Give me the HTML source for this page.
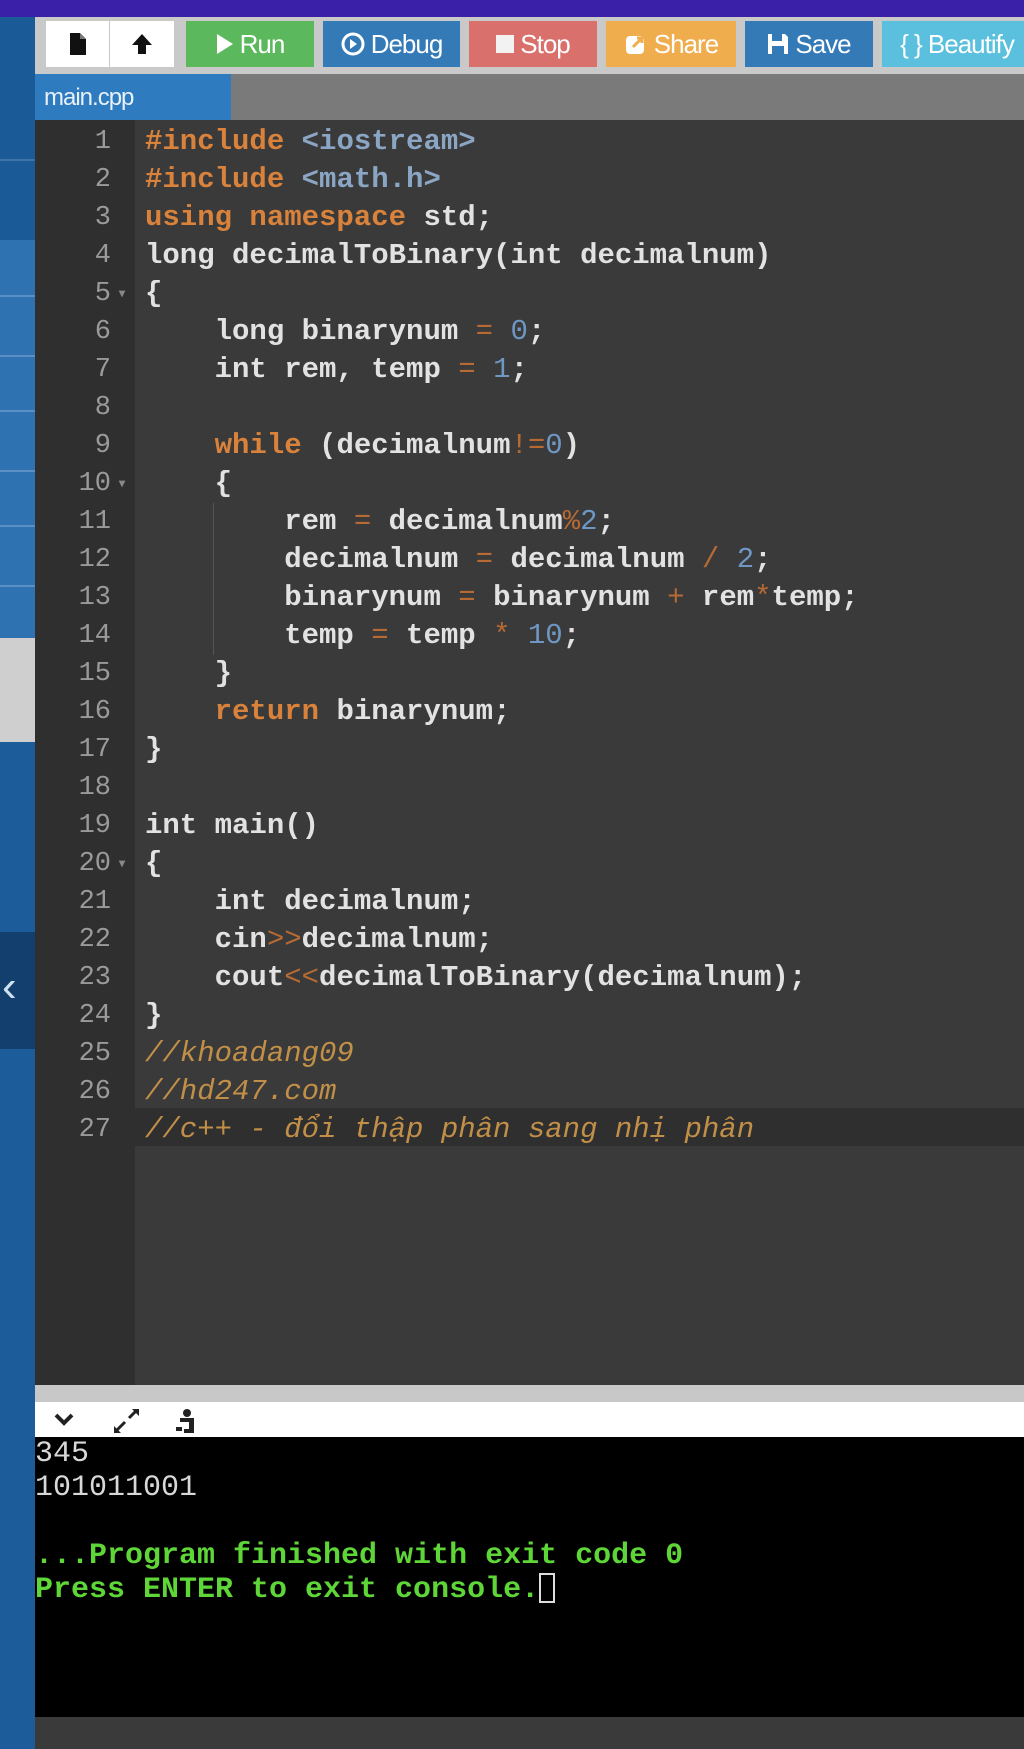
<!DOCTYPE html>
<html><head><meta charset="utf-8">
<style>
*{margin:0;padding:0;box-sizing:border-box}
body{width:1024px;height:1717px;overflow:hidden;background:#3a3a3a;position:relative;font-family:"Liberation Sans",sans-serif}
.abs{position:absolute}
#top{left:0;top:0;width:1024px;height:17px;background:#3a1fa8}
#side{left:0;top:17px;width:35px;height:1700px;background:#2f72b2}
.sl{position:absolute;left:0;width:35px;height:2px;background:#5a90c4}
#tb{left:35px;top:17px;width:989px;height:57px;background:#c9c9c9}
.btn{position:absolute;top:4px;height:46px;color:#fff;font-size:26px;letter-spacing:-1px;display:flex;align-items:center;justify-content:center;gap:6px}
#tabbar{left:35px;top:74px;width:989px;height:46px;background:#7a7a7a}
#tab{left:35px;top:74px;width:196px;height:46px;background:#2e7bbf;color:#e8f0f8;font-size:24px;letter-spacing:-1px;padding:10px 0 0 9px}
#gut{left:35px;top:120px;width:100px;height:1265px;background:#2f2f2f}
#code{left:35px;top:120px;width:989px;height:1265px;font-family:"Liberation Mono",monospace;font-size:29px;font-weight:bold;color:#e2e2e2}
.ln{position:absolute;left:0;width:989px;height:38px;line-height:38px;white-space:pre}
.n{position:absolute;left:0;width:76px;text-align:right;color:#9a9a9a;font-weight:normal;font-size:27px}
.t{position:absolute;left:110px}
.k{color:#d9823b}.s{color:#8ba6c4}.o{color:#b86a34;font-weight:normal}.d{color:#6f97c4;font-weight:normal}
.c{color:#c18f47;font-style:italic;font-weight:normal}
.f{position:absolute;left:84px;top:0;color:#888;font-size:12px}
#sep{left:35px;top:1385px;width:989px;height:17px;background:#c8c8c8}
#cbar{left:35px;top:1402px;width:989px;height:35px;background:#fff}
#con{left:35px;top:1437px;width:989px;height:280px;background:#000;font-family:"Liberation Mono",monospace;font-size:30px;line-height:34px;white-space:pre}
</style></head><body>
<div class="abs" id="top"></div>
<div class="abs" id="side">
 <div class="abs" style="left:0;top:0;width:35px;height:223px;background:#1a5a96"></div>
 <div class="sl" style="top:142px;background:#3e72a8"></div>
 <div class="sl" style="top:278px"></div><div class="sl" style="top:338px"></div><div class="sl" style="top:393px"></div><div class="sl" style="top:453px"></div><div class="sl" style="top:508px"></div><div class="sl" style="top:568px"></div>
 <div class="abs" style="left:0;top:621px;width:35px;height:104px;background:#cfcfcf"></div>
 <div class="abs" style="left:0;top:725px;width:35px;height:190px;background:#1d5c9a"></div>
 <div class="abs" style="left:0;top:915px;width:35px;height:117px;background:#123f6e"></div>
 <div class="abs" style="left:2px;top:950px;color:#cfe0f0;font-size:44px;line-height:40px">‹</div>
 <div class="abs" style="left:0;top:1032px;width:35px;height:700px;background:#1d5c9a"></div>
</div>
<div class="abs" id="tb">
 <div class="btn" style="left:11px;width:63px;background:#fff"><svg width="18" height="24" viewBox="0 0 18 24"><path d="M1 1h10l6 6v16H1z" fill="#111"/><path d="M11 1v6h6" fill="#777"/></svg></div>
 <div class="btn" style="left:75px;width:64px;background:#fff"><svg width="26" height="24" viewBox="0 0 26 24"><path d="M13 2l10 11h-6v9h-8v-9H3z" fill="#111"/></svg></div>
 <div class="btn" style="left:151px;width:128px;background:#5cb85c"><svg width="18" height="22" viewBox="0 0 18 22"><path d="M1 1l16 10L1 21z" fill="#fff"/></svg>Run</div>
 <div class="btn" style="left:288px;width:137px;background:#337ab7"><svg width="24" height="24" viewBox="0 0 24 24"><circle cx="12" cy="12" r="10" fill="none" stroke="#fff" stroke-width="3"/><path d="M9 7l7 5-7 5z" fill="#fff"/></svg>Debug</div>
 <div class="btn" style="left:434px;width:128px;background:#d9706c"><svg width="18" height="18"><rect width="18" height="18" fill="#f2f2f2"/></svg>Stop</div>
 <div class="btn" style="left:571px;width:130px;background:#f0ad4e"><svg width="24" height="24" viewBox="0 0 24 24"><rect x="2" y="4" width="18" height="18" rx="4" fill="#fff"/><path d="M9 15l9-9m-5 0h5v5" stroke="#f0ad4e" stroke-width="3" fill="none"/></svg>Share</div>
 <div class="btn" style="left:710px;width:128px;background:#337ab7"><svg width="22" height="22" viewBox="0 0 22 22"><path d="M1 1h17l3 3v17H1z" fill="#fff"/><rect x="5" y="1" width="10" height="7" fill="#337ab7"/><rect x="5" y="13" width="12" height="8" fill="#337ab7"/></svg>Save</div>
 <div class="btn" style="left:847px;width:150px;background:#5bc0de">{ } Beautify</div>
</div>
<div class="abs" id="tabbar"></div>
<div class="abs" id="tab">main.cpp</div>
<div class="abs" id="gut"></div>
<div class="abs" id="code">
 <div class="abs" style="left:0;top:988px;width:989px;height:38px;background:#2f2f2f"></div>
 <div class="abs" style="left:178px;top:383px;width:1px;height:152px;background:#555"></div>
 <div class="ln" style="top:3px"><span class="n">1</span><span class="t"><span class="k">#include</span> <span class="s">&lt;iostream&gt;</span></span></div>
 <div class="ln" style="top:41px"><span class="n">2</span><span class="t"><span class="k">#include</span> <span class="s">&lt;math.h&gt;</span></span></div>
 <div class="ln" style="top:79px"><span class="n">3</span><span class="t"><span class="k">using namespace</span> std;</span></div>
 <div class="ln" style="top:117px"><span class="n">4</span><span class="t">long decimalToBinary(int decimalnum)</span></div>
 <div class="ln" style="top:155px"><span class="n">5</span><span class="f">▾</span><span class="t">{</span></div>
 <div class="ln" style="top:193px"><span class="n">6</span><span class="t">    long binarynum <span class="o">=</span> <span class="d">0</span>;</span></div>
 <div class="ln" style="top:231px"><span class="n">7</span><span class="t">    int rem, temp <span class="o">=</span> <span class="d">1</span>;</span></div>
 <div class="ln" style="top:269px"><span class="n">8</span></div>
 <div class="ln" style="top:307px"><span class="n">9</span><span class="t">    <span class="k">while</span> (decimalnum<span class="o">!=</span><span class="d">0</span>)</span></div>
 <div class="ln" style="top:345px"><span class="n">10</span><span class="f">▾</span><span class="t">    {</span></div>
 <div class="ln" style="top:383px"><span class="n">11</span><span class="t">        rem <span class="o">=</span> decimalnum<span class="o">%</span><span class="d">2</span>;</span></div>
 <div class="ln" style="top:421px"><span class="n">12</span><span class="t">        decimalnum <span class="o">=</span> decimalnum <span class="o">/</span> <span class="d">2</span>;</span></div>
 <div class="ln" style="top:459px"><span class="n">13</span><span class="t">        binarynum <span class="o">=</span> binarynum <span class="o">+</span> rem<span class="o">*</span>temp;</span></div>
 <div class="ln" style="top:497px"><span class="n">14</span><span class="t">        temp <span class="o">=</span> temp <span class="o">*</span> <span class="d">10</span>;</span></div>
 <div class="ln" style="top:535px"><span class="n">15</span><span class="t">    }</span></div>
 <div class="ln" style="top:573px"><span class="n">16</span><span class="t">    <span class="k">return</span> binarynum;</span></div>
 <div class="ln" style="top:611px"><span class="n">17</span><span class="t">}</span></div>
 <div class="ln" style="top:649px"><span class="n">18</span></div>
 <div class="ln" style="top:687px"><span class="n">19</span><span class="t">int main()</span></div>
 <div class="ln" style="top:725px"><span class="n">20</span><span class="f">▾</span><span class="t">{</span></div>
 <div class="ln" style="top:763px"><span class="n">21</span><span class="t">    int decimalnum;</span></div>
 <div class="ln" style="top:801px"><span class="n">22</span><span class="t">    cin<span class="o">&gt;&gt;</span>decimalnum;</span></div>
 <div class="ln" style="top:839px"><span class="n">23</span><span class="t">    cout<span class="o">&lt;&lt;</span>decimalToBinary(decimalnum);</span></div>
 <div class="ln" style="top:877px"><span class="n">24</span><span class="t">}</span></div>
 <div class="ln" style="top:915px"><span class="n">25</span><span class="t"><span class="c">//khoadang09</span></span></div>
 <div class="ln" style="top:953px"><span class="n">26</span><span class="t"><span class="c">//hd247.com</span></span></div>
 <div class="ln" style="top:991px"><span class="n">27</span><span class="t"><span class="c">//c++ - đổi thập phân sang nhị phân</span></span></div>
</div>
<div class="abs" id="sep"></div>
<div class="abs" id="cbar">
 <svg class="abs" style="left:18px;top:10px" width="22" height="16" viewBox="0 0 22 16"><path d="M3 3l8 8 8-8" stroke="#222" stroke-width="4" fill="none"/></svg>
 <svg class="abs" style="left:78px;top:6px" width="28" height="26" viewBox="0 0 28 26"><path d="M4 22l8-8M16 10l8-8" stroke="#222" stroke-width="3"/><path d="M19 1h7v7zM1 18v7h7z" fill="#222"/></svg>
 <svg class="abs" style="left:135px;top:5px" width="28" height="28" viewBox="0 0 28 28"><circle cx="17" cy="6" r="4" fill="#222"/><path d="M10 11h14v15H14v-4h5v-7h-9z" fill="#222"/><rect x="6" y="20" width="6" height="4" fill="#222"/></svg>
</div>
<div class="abs" id="con"><span style="color:#d8d8d8">345
101011001</span>

<span style="color:#5fd638;font-weight:bold">...Program finished with exit code 0
Press ENTER to exit console.</span><span style="display:inline-block;width:16px;height:30px;border:2px solid #ddd;vertical-align:-6px"></span></div>
</body></html>
